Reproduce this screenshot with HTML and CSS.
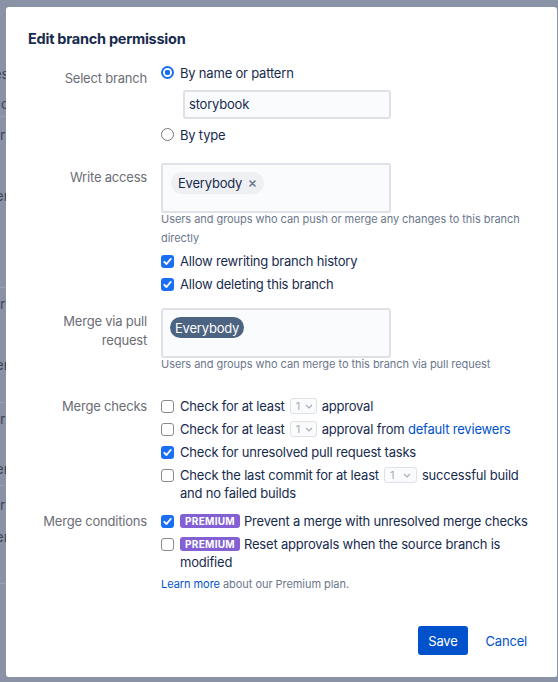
FILE: index.html
```html
<!DOCTYPE html>
<html lang="en">
<head>
<meta charset="utf-8">
<title>Edit branch permission</title>
<link rel="stylesheet" href="styles.css">
</head>
<body>
<div class="page">
  <div class="strip">
    <div class="pg-block b0"><span class="frag">Uses</span><span class="frag">Acc</span></div>
    <div class="pg-block b1"><span class="frag">Pri</span><span class="frag">Oper</span></div>
    <div class="pg-block b2"><span class="frag">Pri</span><span class="frag">Oper</span></div>
    <div class="pg-block b3"><span class="frag">Pri</span><span class="frag">Oper</span></div>
    <div class="pg-block b4"><span class="frag">Pri</span><span class="frag">Oper</span></div>
  </div>
</div>

<div class="modal">
  <h1 class="title">Edit branch permission</h1>

  <div class="form">
    <div class="field field-select">
      <div class="label">Select branch</div>
      <div class="controls">
        <div class="opt"><span class="radio on"></span><span>By name or pattern</span></div>
        <div class="text-input">storybook</div>
        <div class="opt opt-type"><span class="radio"></span><span>By type</span></div>
      </div>
    </div>

    <div class="field field-write">
      <div class="label">Write access</div>
      <div class="controls">
        <div class="picker">
          <span class="chip">Everybody<svg class="chip-x" width="7" height="7" viewBox="0 0 7 7"><path d="M1 1L6 6M6 1L1 6" stroke="#6b778c" stroke-width="1.6" stroke-linecap="round"/></svg></span>
        </div>
        <div class="help">Users and groups who can push or merge any changes to this branch directly</div>
        <div class="checks checks-write">
          <div class="opt"><span class="cb on"><svg viewBox="0 0 13 13" width="13" height="13"><path d="M3.3 6.8L5.5 9L9.8 3.9" fill="none" stroke="#fff" stroke-width="1.8" stroke-linecap="round" stroke-linejoin="round"/></svg></span><span>Allow rewriting branch history</span></div>
          <div class="opt"><span class="cb on"><svg viewBox="0 0 13 13" width="13" height="13"><path d="M3.3 6.8L5.5 9L9.8 3.9" fill="none" stroke="#fff" stroke-width="1.8" stroke-linecap="round" stroke-linejoin="round"/></svg></span><span>Allow deleting this branch</span></div>
        </div>
      </div>
    </div>

    <div class="field field-merge">
      <div class="label label-two">Merge via pull request</div>
      <div class="controls">
        <div class="picker picker-dark">
          <span class="chip-dark">Everybody</span>
        </div>
        <div class="help">Users and groups who can merge to this branch via pull request</div>
      </div>
    </div>

    <div class="field field-checks">
      <div class="label">Merge checks</div>
      <div class="controls checks">
        <div class="opt"><span class="cb"></span><span>Check for at least<span class="sel">1<svg width="8" height="5" viewBox="0 0 8 5"><path d="M1 1L4 4L7 1" fill="none" stroke="#a5adba" stroke-width="1.1"/></svg></span>approval</span></div>
        <div class="opt"><span class="cb"></span><span>Check for at least<span class="sel">1<svg width="8" height="5" viewBox="0 0 8 5"><path d="M1 1L4 4L7 1" fill="none" stroke="#a5adba" stroke-width="1.1"/></svg></span>approval from <a class="link" href="#">default reviewers</a></span></div>
        <div class="opt"><span class="cb on"><svg viewBox="0 0 13 13" width="13" height="13"><path d="M3.3 6.8L5.5 9L9.8 3.9" fill="none" stroke="#fff" stroke-width="1.8" stroke-linecap="round" stroke-linejoin="round"/></svg></span><span>Check for unresolved pull request tasks</span></div>
        <div class="opt"><span class="cb"></span><span>Check the last commit for at least<span class="sel sel-wide">1<svg width="8" height="5" viewBox="0 0 8 5"><path d="M1 1L4 4L7 1" fill="none" stroke="#a5adba" stroke-width="1.1"/></svg></span>successful build and no failed builds</span></div>
      </div>
    </div>

    <div class="field field-conditions">
      <div class="label">Merge conditions</div>
      <div class="controls">
        <div class="checks">
          <div class="opt"><span class="cb on"><svg viewBox="0 0 13 13" width="13" height="13"><path d="M3.3 6.8L5.5 9L9.8 3.9" fill="none" stroke="#fff" stroke-width="1.8" stroke-linecap="round" stroke-linejoin="round"/></svg></span><span><span class="badge">PREMIUM</span>Prevent a merge with unresolved merge checks</span></div>
          <div class="opt"><span class="cb"></span><span><span class="badge">PREMIUM</span>Reset approvals when the source branch is modified</span></div>
        </div>
        <div class="learn"><a class="link" href="#">Learn more</a> about our Premium plan.</div>
      </div>
    </div>
  </div>

  <div class="footer">
    <button class="btn btn-primary" type="button">Save</button>
    <button class="btn btn-link" type="button">Cancel</button>
  </div>
</div>
</body>
</html>
```

FILE: styles.css
```css
html, body {
  margin: 0;
  padding: 0;
}

body {
  width: 558px;
  height: 682px;
  overflow: hidden;
  background: #8a93a5;
  font-family: Inter, "Noto Sans", "Liberation Sans", sans-serif;
  color: #172b4d;
}

/* underlying page, dimmed behind the modal */
.page {
  height: 682px;
  background: #8a93a5;
}

.strip {
  width: 9px;
  overflow: hidden;
  display: flex;
  flex-direction: column;
}

.pg-block {
  display: flex;
  flex-direction: column;
  align-items: flex-end;
  border-bottom: 1px solid #9aa1b0;
}

.frag {
  font-size: 14px;
  line-height: 20px;
  color: #3e4657;
  white-space: nowrap;
}

.b0 { padding: 64px 0 2px; gap: 10px; }
.b1 { padding: 8px 0 81px; gap: 41px; }
.b2 { padding: 6px 0 27px; gap: 41px; }
.b3 { padding: 6px 0 6px; gap: 30px; }
.b4 { padding: 9px 0 36px; gap: 12px; }

/* modal */
.modal {
  position: absolute;
  left: 6px;
  top: 7px;
  width: 551px;
  height: 670px;
  box-sizing: border-box;
  padding: 22px 20px 22px 22px;
  background: #fff;
  border-radius: 3px 3px 2px 3px;
  display: flex;
  flex-direction: column;
  letter-spacing: -0.2px;
}

.title {
  margin: 0;
  font-size: 14.5px;
  line-height: 20px;
  font-weight: 700;
  letter-spacing: -0.25px;
  color: #172b4d;
}

.form {
  margin-top: 15px;
  display: flex;
  flex-direction: column;
}

.field {
  display: grid;
  grid-template-columns: 119px 1fr;
  column-gap: 14px;
}

.label {
  text-align: right;
  font-size: 13px;
  line-height: 18px;
  color: #6b6e75;
}

.field-select .label,
.field-write .label {
  padding-top: 5px;
}

.label-two {
  line-height: 19px;
  padding-top: 4px;
}

.controls {
  display: flex;
  flex-direction: column;
  font-size: 13px;
  color: #172b4d;
  min-width: 0;
}

.opt {
  display: flex;
  align-items: flex-start;
  gap: 6px;
  line-height: 18px;
}

.radio {
  flex: none;
  width: 13px;
  height: 13px;
  margin-top: 2px;
  box-sizing: border-box;
  border: 1px solid #7a7a7a;
  border-radius: 50%;
  background: #fff;
}

.radio.on {
  border: 2px solid #1a6ef4;
  background: radial-gradient(circle, #1a6ef4 0 2.6px, #fff 3px);
}

.cb {
  flex: none;
  width: 13px;
  height: 13px;
  margin-top: 2.5px;
  box-sizing: border-box;
  border: 1px solid #8a8a8a;
  border-radius: 3px;
  background: #fff;
}

.cb.on {
  border: none;
  background: #1a6ef4;
}

.cb svg {
  display: block;
}

.text-input {
  margin: 8px 0 0 22px;
  width: 208px;
  height: 29px;
  box-sizing: border-box;
  padding: 0 4px;
  border: 2px solid #dfe1e6;
  border-radius: 3px;
  background: #fafbfc;
  line-height: 25px;
  font-size: 13px;
  color: #172b4d;
}

.opt-type {
  margin-top: 7px;
}

.field-write {
  margin-top: 19px;
}

.picker {
  width: 230px;
  height: 50px;
  box-sizing: border-box;
  padding: 7px 8px;
  border: 2px solid #dfe1e6;
  border-radius: 3px;
  background: #fafbfc;
}

.picker-dark {
  padding-left: 7px;
}

.chip {
  display: inline-flex;
  align-items: center;
  gap: 7px;
  height: 22px;
  padding: 0 8px 0 7px;
  border-radius: 11px;
  background: #eff0f3;
  font-size: 13px;
  color: #172b4d;
}

.chip-x {
  display: block;
}

.chip-dark {
  display: inline-flex;
  align-items: center;
  height: 21px;
  padding: 0 5px;
  border-radius: 11px;
  background: #4c6381;
  color: #fff;
  font-size: 13px;
}

.help {
  margin-top: -3px;
  font-size: 11px;
  line-height: 19px;
  letter-spacing: -0.05px;
  color: #6b778c;
}

.checks {
  display: flex;
  flex-direction: column;
  gap: 5px;
}

.checks-write {
  margin-top: 4px;
}

.field-merge {
  margin-top: 15px;
}

.field-checks {
  margin-top: 23px;
}

.field-conditions {
  margin-top: 10px;
}

.sel {
  display: inline-flex;
  align-items: center;
  justify-content: space-between;
  vertical-align: top;
  width: 27px;
  height: 16px;
  box-sizing: border-box;
  margin: 1px 5px 0;
  padding: 0 3px 0 5px;
  border: 1px solid #dfe1e6;
  border-radius: 3px;
  background: #fafbfc;
  color: #a5adba;
  font-size: 11px;
  line-height: 14px;
  letter-spacing: 0;
}

.sel-wide {
  width: 33px;
  padding-right: 5px;
}

.link {
  color: #0052cc;
  text-decoration: none;
}

.badge {
  display: inline-block;
  height: 14px;
  line-height: 14px;
  padding: 0 5px;
  margin-right: 4px;
  vertical-align: top;
  margin-top: 2px;
  border-radius: 3px;
  background: #8360d3;
  color: #fff;
  font-size: 10px;
  font-weight: 700;
  letter-spacing: 0.3px;
}

.learn {
  margin-top: 4px;
  font-size: 11px;
  line-height: 18px;
  letter-spacing: -0.05px;
  color: #6b778c;
}

.footer {
  margin-top: auto;
  display: flex;
  justify-content: flex-end;
  gap: 8px;
}

.btn {
  height: 29px;
  padding: 0 10px;
  border: none;
  border-radius: 3px;
  font-family: inherit;
  font-size: 13px;
  letter-spacing: -0.2px;
  cursor: pointer;
}

.btn-primary {
  background: #0052cc;
  color: #fff;
}

.btn-link {
  background: transparent;
  color: #0052cc;
}
```
